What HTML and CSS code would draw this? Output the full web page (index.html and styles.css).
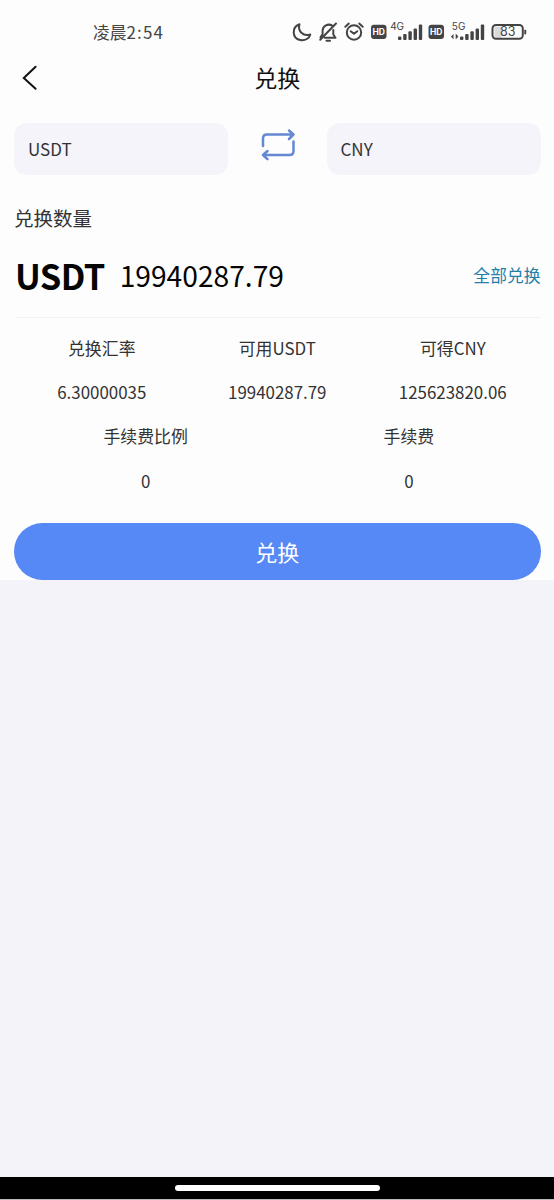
FILE: index.html
```
<!DOCTYPE html>
<html lang="zh-CN">
<head>
<meta charset="utf-8">
<title>兑换</title>
<link rel="stylesheet" href="styles.css">
</head>
<body>
<main class="screen">
  <section class="panel">
    <div class="status">
      <span class="clock">凌晨<span class="time">2:54</span></span>
      <svg class="status-icons" width="240" height="28" viewBox="290 18 240 28" fill="none" stroke="#444" stroke-width="2" stroke-linecap="round" stroke-linejoin="round">
        <path d="M299.500 24.200C291.500 27 291.800 38.500 300.500 40.100C305.300 40.900 309.300 38.300 310.300 34.400C303 36.700 297.500 31 299.500 24.200Z"/>
        <path d="M332.500 25.900C328 22.800 322.800 26 322.600 30.500V34L320.500 37.300M324.800 37.700H335.500L333.300 34.500V30M336 23.500L320.200 39.800M326.500 40.700H330"/>
        <circle cx="354" cy="32.500" r="7.200"/>
        <path d="M350.700 31.200L354 33.800L357.300 31.200M345.300 26.800L348.800 23.600M362.700 26.800L359.200 23.600"/>
        <g fill="#444" stroke="none">
          <rect x="371" y="24.700" width="15.500" height="14.300" rx="3"/>
          <rect x="428.500" y="24.700" width="15.500" height="14.300" rx="3"/>
          <rect x="398" y="36.500" width="3.400" height="3.500" rx="1"/><rect x="403.200" y="34" width="3.400" height="6" rx="1"/><rect x="408.400" y="31.200" width="3.400" height="8.800" rx="1"/><rect x="413.600" y="28.400" width="3.400" height="11.600" rx="1"/><rect x="418.800" y="24.500" width="3.400" height="15.500" rx="1"/>
          <rect x="460" y="36.500" width="3.400" height="3.500" rx="1"/><rect x="465.200" y="34" width="3.400" height="6" rx="1"/><rect x="470.400" y="31.200" width="3.400" height="8.800" rx="1"/><rect x="475.600" y="28.400" width="3.400" height="11.600" rx="1"/><rect x="480.800" y="24.500" width="3.400" height="15.500" rx="1"/>
          <path d="M453.500 34V39.500L451 36.500ZM455.700 39.500V33.500L458.400 36.500Z"/>
          <rect x="494.500" y="26.700" width="7" height="11" fill="#dadada"/>
          <rect x="524.300" y="29.700" width="1.900" height="4.800" rx=".9"/>
        </g>
        <rect x="492.500" y="25" width="30.300" height="13.700" rx="3.500"/>
        <g class="glyphs" stroke="none">
          <text class="hd" x="378.700" y="35.200">HD</text><text class="hd" x="436.200" y="35.200">HD</text>
          <text class="net" x="397.100" y="30">4G</text><text class="net" x="458.600" y="30">5G</text>
          <text class="charge" x="507.800" y="36.200">83</text>
        </g>
      </svg>
    </div>
    <header class="topbar">
      <svg class="back" width="16" height="26" viewBox="0 0 16 26" fill="none" stroke="#111" stroke-width="2" stroke-linecap="round"><path d="M13.600 1.700L1.800 12.900L13.600 23.700"/></svg>
      <h1 class="title">兑换</h1>
    </header>
    <div class="pair">
      <div class="coin">USDT</div>
      <svg class="swap" width="36" height="34" viewBox="0 0 36 34" fill="none" stroke="#6488d2" stroke-width="2.500" stroke-linecap="round" stroke-linejoin="round"><path d="M3 18V10.500Q3 6.500 7 6.500H32.500M29 2.500L33.500 6.500L29 11M33.500 13.500V23Q33.500 27 29.500 27H4M7.500 23L3 27L7.500 31.200"/></svg>
      <div class="coin">CNY</div>
    </div>
    <h2 class="label">兑换数量</h2>
    <div class="amount">
      <strong class="unit">USDT</strong>
      <span class="value">19940287.79</span>
      <a class="all">全部兑换</a>
    </div>
    <div class="stats three">
      <span>兑换汇率</span><span>可用USDT</span><span>可得CNY</span>
      <span>6.30000035</span><span>19940287.79</span><span>125623820.06</span>
    </div>
    <div class="stats two">
      <span>手续费比例</span><span>手续费</span>
      <span>0</span><span>0</span>
    </div>
    <button class="submit">兑换</button>
  </section>
  <footer class="navbar"><span class="handle"></span></footer>
</main>
</body>
</html>
```
FILE: styles.css
```
* { box-sizing: border-box; }
body { margin: 0; font-family: "Noto Sans CJK SC", sans-serif; color: #333; }
.screen { display: flex; flex-direction: column; height: 1200px; background: #f3f3f9; }
.panel { display: flex; flex-direction: column; height: 580px; padding: 0 13.500px 0 14px; background: #fdfdfd; }
.status { display: flex; justify-content: space-between; align-items: center; height: 64px; padding: 0 10.500px 0 79px; }
.clock { font-size: 16.800px; line-height: 24px; color: #444; }
.time { font-size: 17px; letter-spacing: 1.100px; }
.glyphs { text-anchor: middle; fill: #444; }
.hd { font: bold 8.500px Inter, sans-serif; fill: #fff; }
.net { font: 10px Inter, sans-serif; }
.charge { font: 12.500px Inter, sans-serif; }
.topbar { display: grid; grid-template-columns: 60px 1fr 60px; align-items: center; height: 28px; }
.back { margin-left: 8px; }
.title { margin: -2px 0 0; font-size: 23px; font-weight: 400; line-height: 28px; text-align: center; color: #111; }
.pair { display: grid; grid-template-columns: 214px 36px 214px; justify-content: space-between; align-items: center; margin-top: 31px; height: 52px; }
.coin { height: 52px; padding-left: 14px; border-radius: 13px; background: #f4f4fa; font-size: 17px; line-height: 52px; }
.swap { margin: -8px 0 0 .5px; }
.label { margin: 29px 0 0; font-size: 19.500px; font-weight: 400; line-height: 28px; }
.amount { display: flex; align-items: center; height: 86px; margin-left: 1px; border-bottom: 1px solid #f1f1f3; }
.unit { font-size: 34.500px; font-weight: 600; line-height: 50px; letter-spacing: -.6px; color: #050505; }
.value { margin-left: 15px; font-size: 28.200px; color: #050505; }
.all { margin-left: auto; font-size: 16.800px; color: #2580a8; }
.stats { display: grid; font-size: 16.900px; line-height: 44.200px; text-align: center; }
.three { grid-template-columns: repeat(3, 1fr); margin-top: 8px; }
.two { grid-template-columns: repeat(2, 1fr); }
.submit { margin-top: auto; height: 57px; padding: 0 0 2px; border: 0; border-radius: 29px; background: #5689f5; color: #fff; font-family: inherit; font-size: 22px; }
.navbar { display: flex; justify-content: center; align-items: center; height: 23px; margin-top: auto; border-bottom: 1px solid #b9b9bc; background: #000; }
.handle { width: 205px; height: 6px; border-radius: 3px; background: #fff; }
```
